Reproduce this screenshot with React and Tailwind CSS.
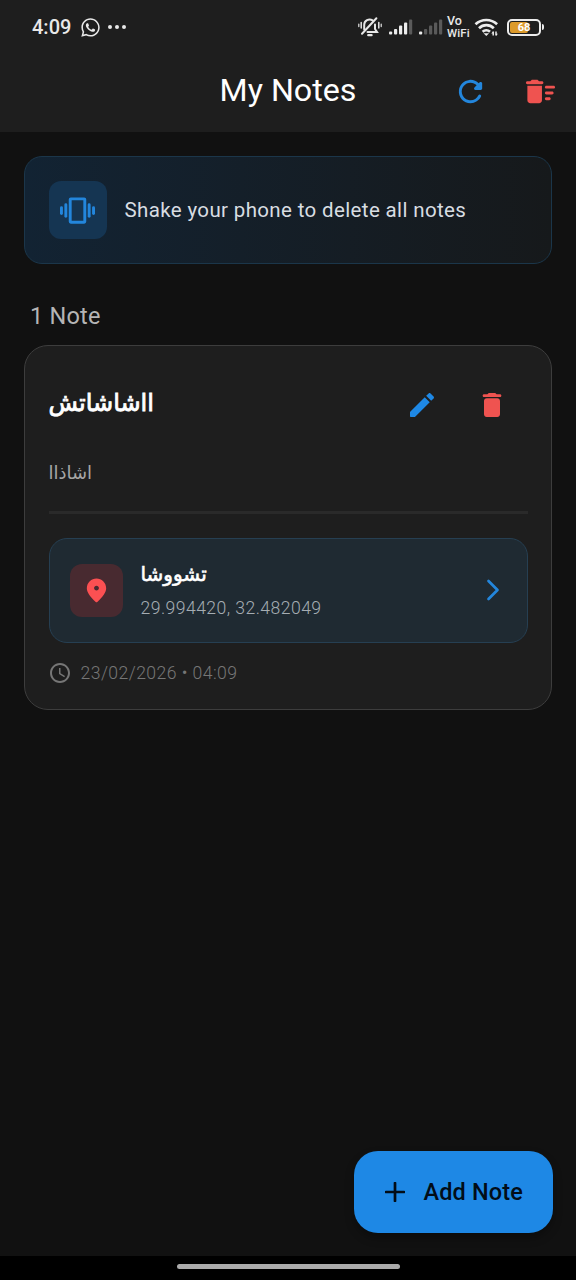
import React from 'react';
import { FaWhatsapp } from 'react-icons/fa';
import { MdAccessTime } from 'react-icons/md';

const PATHS = {
    refresh: 'M17.65 6.35c-1.63-1.63-3.94-2.57-6.48-2.31-3.67.37-6.69 3.35-7.1 7.02C3.52 15.91 7.27 20 12 20c3.19 0 5.93-1.87 7.21-4.56.32-.67-.16-1.44-.9-1.44-.37 0-.72.2-.88.53-1.13 2.43-3.84 3.97-6.8 3.31-2.22-.49-4.01-2.3-4.48-4.52C5.31 9.44 8.26 6 12 6c1.66 0 3.14.69 4.22 1.78l-1.51 1.51c-.63.63-.19 1.71.7 1.71H19c.55 0 1-.45 1-1V6.41c0-.89-1.08-1.34-1.71-.71l-.64.65z',
    sweep: 'M16 16h2c.55 0 1 .45 1 1s-.45 1-1 1h-2c-.55 0-1-.45-1-1s.45-1 1-1zm0-8h5c.55 0 1 .45 1 1s-.45 1-1 1h-5c-.55 0-1-.45-1-1s.45-1 1-1zm0 4h4c.55 0 1 .45 1 1s-.45 1-1 1h-4c-.55 0-1-.45-1-1s.45-1 1-1zM3 18c0 1.1.9 2 2 2h6c1.1 0 2-.9 2-2V8H3v10zM13 5h-2l-.71-.71c-.18-.18-.44-.29-.7-.29H6.41c-.26 0-.52.11-.7.29L5 5H3c-.55 0-1 .45-1 1s.45 1 1 1h10c.55 0 1-.45 1-1s-.45-1-1-1z',
    edit: 'M3 17.46v3.04c0 .28.22.5.5.5h3.04c.13 0 .26-.05.35-.15L17.81 9.94l-3.75-3.75L3.15 17.1c-.1.1-.15.22-.15.36zM20.71 7.04c.39-.39.39-1.02 0-1.41l-2.34-2.34c-.39-.39-1.02-.39-1.41 0l-1.83 1.83 3.75 3.75 1.83-1.83z',
    trash: 'M6 19c0 1.1.9 2 2 2h8c1.1 0 2-.9 2-2V9c0-1.1-.9-2-2-2H8c-1.1 0-2 .9-2 2v10zM18 4h-2.5l-.71-.71c-.18-.18-.44-.29-.7-.29H9.91c-.26 0-.52.11-.7.29L8.5 4H6c-.55 0-1 .45-1 1s.45 1 1 1h12c.55 0 1-.45 1-1s-.45-1-1-1z',
    pin: 'M12 2c-4.2 0-8 3.22-8 8.2 0 3.18 2.45 6.92 7.34 11.23.38.33.95.33 1.33 0C17.55 17.12 20 13.38 20 10.2 20 5.22 16.2 2 12 2zm0 10c-1.1 0-2-.9-2-2s.9-2 2-2 2 .9 2 2-.9 2-2 2z',
};

const Icon = ({ name, className }) => (
    <svg viewBox="0 0 24 24" fill="currentColor" className={className}>
        <path d={PATHS[name]} />
    </svg>
);

const VibrationIcon = () => (
    <svg viewBox="0 0 24 24" fill="currentColor" className="h-[35px] w-[35px] text-[#2386dc]">
        <rect x="0" y="9" width="2" height="6" rx="1" />
        <rect x="3" y="7" width="2" height="10" rx="1" />
        <rect x="19" y="7" width="2" height="10" rx="1" />
        <rect x="22" y="9" width="2" height="6" rx="1" />
        <rect x="7" y="4" width="10" height="16" rx="0.4" fill="none" stroke="currentColor" strokeWidth="2" />
    </svg>
);

const MutedBell = () => (
    <svg viewBox="0 0 24 22" fill="none" stroke="#e6e6e6" strokeWidth="2" strokeLinecap="round" className="h-[22px] w-6">
        <path d="M6.2 13.5V9a5.4 5.4 0 0 1 8.4-4.6M17 8.5V13l2 3H9.5" />
        <path d="M4 17.8L18.4 2.2" />
        <path d="M10.2 19.2h3.4" strokeWidth="2.2" />
        <path d="M3.2 6.5v5.5M20.8 6.5v5.5" strokeWidth="1.5" />
        <path d="M0.8 8v2.6M23.2 8v2.6" strokeWidth="1.2" />
    </svg>
);

const Signal = ({ level }) => (
    <svg viewBox="0 0 24 16" className="h-4 w-6">
        {[3, 5.5, 9, 12, 15].map((h, i) => (
            <rect key={h} x={i * 5} y={15.5 - h} width="3.2" height={h} rx="1" fill={i < level ? '#ececec' : '#5a5a5a'} />
        ))}
    </svg>
);

const Wifi = () => (
    <svg viewBox="0 0 26 20" fill="none" stroke="#ececec" strokeWidth="2.7" className="h-5 w-[26px]">
        <path d="M1.5 7.2a16 16 0 0 1 21.6 0M5 11.2a10.6 10.6 0 0 1 14.8 0" />
        <path d="M8.6 14.8a5.6 5.6 0 0 1 7.4 0" />
        <path d="M9.5 16.2h5.6l-2.8 2.9z" fill="#ececec" stroke="none" />
        <path d="M19.2 14.5v4M22 14.5v4" strokeWidth="1.5" />
        <path d="M17.2 16.4l2-2v2zM24 16.8l-2 2v-2z" fill="#ececec" stroke="none" />
    </svg>
);

const StatusBar = () => (
    <div className="flex h-[54px] items-center justify-between pl-8 pr-8 text-[#e8e8e8]">
        <div className="flex items-center">
            <span className="w-[48px] text-[20px] font-medium leading-none">4:09</span>
            <FaWhatsapp className="h-[21px] w-[21px]" />
            <div className="ml-[7px] flex gap-[3.5px]">
                {[0, 1, 2].map((d) => <span key={d} className="h-[3.5px] w-[3.5px] rounded-full bg-[#e8e8e8]" />)}
            </div>
        </div>
        <div className="flex items-center">
            <MutedBell />
            <div className="ml-[7px] flex gap-[6px]">
                <Signal level={4} />
                <Signal level={1} />
            </div>
            <div className="ml-[4px] flex w-[24px] flex-col font-medium">
                <span className="text-[12.5px] leading-[12px]">Vo</span>
                <span className="text-[11.5px] leading-[12px] tracking-[0.1px]">WiFi</span>
            </div>
            <div className="ml-[3px]"><Wifi /></div>
            <div className="ml-[7px] flex h-[17px] w-[34px] items-center rounded-[5px] border-2 border-[#ececec] p-px">
                <div className="relative flex h-full w-full items-center justify-center">
                    <div className="absolute left-0 top-0 h-full w-[18px] rounded-[2px] bg-[#dc9a2b]" />
                    <span className="relative text-[11px] font-bold leading-none text-white">68</span>
                </div>
            </div>
            <div className="ml-px h-[6px] w-[2px] rounded-r bg-[#ececec]" />
        </div>
    </div>
);

export default function App() {
    return (
        <div className="flex h-[1280px] w-[576px] flex-col overflow-hidden bg-[#111111] font-['Roboto','DejaVu_Sans',sans-serif]">
            {/* App bar */}
            <header className="h-[132px] flex-shrink-0 bg-[#1e1e1e]">
                <StatusBar />
                <div className="grid h-[73px] grid-cols-[1fr_auto_1fr] items-center">
                    <span />
                    <h1 className="whitespace-nowrap text-[32.2px] leading-none text-white">My Notes</h1>
                    <div className="flex justify-end pr-px pt-px">
                        <button className="flex h-[70px] w-[70px] items-center justify-center">
                            <Icon name="refresh" className="h-[35px] w-[35px] text-[#2386dc]" />
                        </button>
                        <button className="flex h-[70px] w-[70px] items-center justify-center">
                            <Icon name="sweep" className="h-[35px] w-[35px] text-[#ef5350]" />
                        </button>
                    </div>
                </div>
            </header>

            <main className="flex flex-1 flex-col px-6 pt-6">
                {/* Shake hint */}
                <div className="flex h-[108px] items-center rounded-[18px] border-[1.5px] border-[#1b364a] bg-linear-to-r from-[#122333] to-[#16191b] pl-[23.5px]">
                    <div className="flex h-[58px] w-[58px] items-center justify-center rounded-[12px] bg-[#153552]">
                        <VibrationIcon />
                    </div>
                    <p className="ml-[18px] pt-px text-[20.5px] tracking-[0.36px] text-[#d8dde2]">Shake your phone to delete all notes</p>
                </div>

                <p className="mt-[36px] pl-[6px] text-[23.5px] leading-[32px] tracking-[0.2px] text-[#b5b5b5]">1 Note</p>

                {/* Note card */}
                <article className="mt-[13px] h-[365px] rounded-[24px] border-[1.5px] border-[#3d3d3d] bg-[#1e1e1e] px-[23.5px] pt-[23.5px]">
                    <div className="flex h-[70px] items-center pr-px">
                        <h2 className="flex-1 pb-[3px] text-[24px] font-normal leading-none text-white [-webkit-text-stroke:0.8px_white]">ااشاشاتش</h2>
                        <button className="flex h-[70px] w-[70px] items-center justify-center">
                            <Icon name="edit" className="h-8 w-8 text-[#1e88e5]" />
                        </button>
                        <button className="flex h-[70px] w-[70px] items-center justify-center">
                            <Icon name="trash" className="h-8 w-8 text-[#ef5350]" />
                        </button>
                    </div>
                    <p className="mt-[18px] h-[29px] text-[18px] leading-[29px] text-[#a6a6a6]">اشاذاا</p>
                    <div className="mt-[24px] h-[3px] bg-[#2a2a2a]" />
                    <div className="mt-[24px] flex h-[105px] items-center rounded-[18px] border-[1.5px] border-[#263f52] bg-[#1f2a32] pl-5 pr-[22px]">
                        <div className="flex h-[53px] w-[53px] items-center justify-center rounded-[12px] bg-[#482a30]">
                            <Icon name="pin" className="h-[29px] w-[29px] text-[#fb5052]" />
                        </div>
                        <div className="ml-[18px] flex-1">
                            <p className="text-[20px] leading-[30px] text-white [-webkit-text-stroke:0.6px_white]">تشووشا</p>
                            <p className="mt-[6px] text-[17.6px] font-light leading-[26px] tracking-[0.44px] text-[#a5adb3]">29.994420, 32.482049</p>
                        </div>
                        <svg viewBox="0 0 24 24" fill="none" stroke="#2386dc" strokeWidth="2.7" strokeLinecap="round" strokeLinejoin="round" className="h-6 w-6">
                            <path d="M7.5 3l9 9-9 9" />
                        </svg>
                    </div>
                    <div className="-ml-px mt-[17px] flex h-[26px] items-center text-[#767676]">
                        <MdAccessTime className="h-6 w-6" />
                        <span className="ml-[9px] pt-px text-[17.6px] font-light tracking-[0.44px]">23/02/2026 • 04:09</span>
                    </div>
                </article>

                <button className="-mr-[0.5px] mb-[23px] mt-auto flex h-[82px] w-[199px] items-center self-end rounded-[24px] bg-[#1e88e5] pl-[31px] text-[#020d18] shadow-[0_5px_10px_rgba(0,0,0,0.3)]">
                    <svg viewBox="0 0 20 20" stroke="currentColor" strokeWidth="2.7" strokeLinecap="round" className="h-5 w-5">
                        <path d="M10 1v18M1 10h18" />
                    </svg>
                    <span className="ml-[19px] whitespace-nowrap pt-px text-[23.5px] font-medium tracking-[0.15px]">Add Note</span>
                </button>
            </main>

            {/* Gesture bar */}
            <div className="flex h-6 flex-shrink-0 items-center justify-center bg-black pb-[3px]">
                <div className="h-[5px] w-[223px] rounded-full bg-[#ababab]" />
            </div>
        </div>
    );
}
